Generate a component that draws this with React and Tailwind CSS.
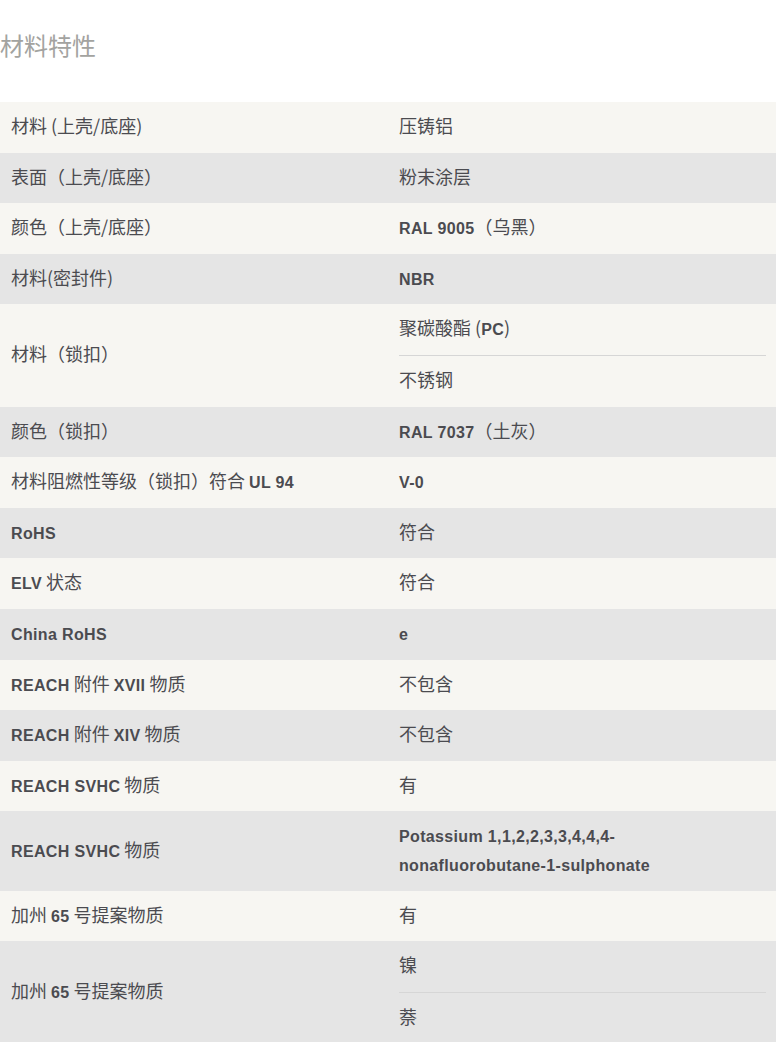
import React from "react";

const rows = [
  ["材料 (上壳/底座)", ["压铸铝"]],
  ["表面（上壳/底座）", ["粉末涂层"]],
  ["颜色（上壳/底座）", ["RAL 9005（乌黑）"]],
  ["材料(密封件)", ["NBR"]],
  ["材料（锁扣）", ["聚碳酸酯 (PC)", "不锈钢"]],
  ["颜色（锁扣）", ["RAL 7037（土灰）"]],
  ["材料阻燃性等级（锁扣）符合 UL 94", ["V-0"]],
  ["RoHS", ["符合"]],
  ["ELV 状态", ["符合"]],
  ["China RoHS", ["e"]],
  ["REACH 附件 XVII 物质", ["不包含"]],
  ["REACH 附件 XIV 物质", ["不包含"]],
  ["REACH SVHC 物质", ["有"]],
  ["REACH SVHC 物质", ["Potassium 1,1,2,2,3,3,4,4,4-\nnonafluorobutane-1-sulphonate"]],
  ["加州 65 号提案物质", ["有"]],
  ["加州 65 号提案物质", ["镍", "萘"]],
];

const latinFont = { fontFamily: '"Liberation Sans", Arial, sans-serif' };

function Line({ s }) {
  const parts = s.split(/([A-Za-z0-9][A-Za-z0-9 ,\-]*[A-Za-z0-9\-]|[A-Za-z0-9])/);
  return (
    <>
      {parts.map((p, i) =>
        /[A-Za-z0-9]/.test(p) ? (
          <span
            key={i}
            className="font-bold text-[16px] leading-none tracking-[0.35px]"
            style={latinFont}
          >
            {p}
          </span>
        ) : (
          <span key={i}>{p}</span>
        )
      )}
    </>
  );
}

function Txt({ s }) {
  const lines = s.split("\n");
  return (
    <>
      {lines.map((l, i) => (
        <React.Fragment key={i}>
          {i > 0 && <br />}
          <Line s={l} />
        </React.Fragment>
      ))}
    </>
  );
}

export default function App() {
  return (
    <div
      className="w-[776px] bg-white text-[#4b4b50]"
      style={{ fontFamily: '"Noto Sans CJK SC", sans-serif' }}
    >
      <div className="pt-[27px] pb-[39px] text-[24px] leading-[36px] text-[#a3a3a0]">
        材料特性
      </div>
      <div className="flex flex-col">
        {rows.map(([label, vals], i) => (
          <div
            key={i}
            className={`grid grid-cols-2 text-[18px] leading-[28.8px] ${
              i % 2 === 0 ? "bg-[#f7f6f2]" : "bg-[#e5e5e5]"
            }`}
          >
            <div className="flex items-center px-[11px] pt-[9px] pb-[12.8px]">
              <div>
                <Txt s={label} />
              </div>
            </div>
            <div className="flex flex-col pl-[11px] pr-[10px]">
              {vals.map((v, j) => (
                <div
                  key={j}
                  className={`pt-[9px] pb-[12.8px] ${
                    j > 0 ? "border-t border-[#d6d6d6]" : ""
                  }`}
                >
                  <Txt s={v} />
                </div>
              ))}
            </div>
          </div>
        ))}
      </div>
    </div>
  );
}
